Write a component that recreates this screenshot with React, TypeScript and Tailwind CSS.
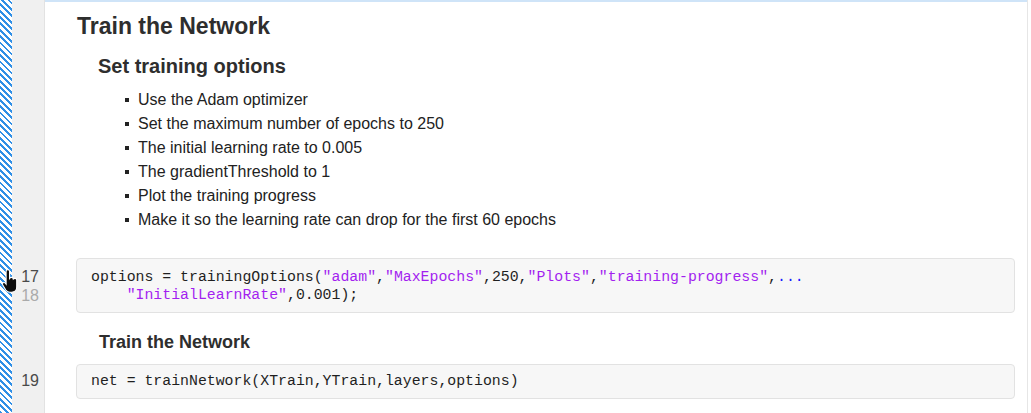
import React from 'react'

const sans = "font-['Liberation_Sans',Arial,sans-serif]"
const mono = "font-['Liberation_Mono','Courier_New',monospace]"

const bullets = [
  'Use the Adam optimizer',
  'Set the maximum number of epochs to 250',
  'The initial learning rate to 0.005',
  'The gradientThreshold to 1',
  'Plot the training progress',
  'Make it so the learning rate can drop for the first 60 epochs',
]

function Str({ children }: { children: React.ReactNode }) {
  return <span className="text-[#a31ff0]">{children}</span>
}

// gutter cell + content cell, so line numbers follow the flow of the code
function Row({
  gutter,
  children,
  className = '',
}: {
  gutter?: React.ReactNode
  children?: React.ReactNode
  className?: string
}) {
  return (
    <div className={`flex ${className}`}>
      <div className="w-[33px] shrink-0 bg-[#f0f0f0] border-r border-[#e2e2e2] pr-[5px] text-right text-[16px] leading-[18px]">
        {gutter}
      </div>
      <div className="flex-1 min-w-0 pr-[12px]">{children}</div>
    </div>
  )
}

function PointerHand() {
  return (
    <svg
      className="absolute left-[1px] top-[267px]"
      width="18"
      height="26"
      viewBox="0 0 16 24"
    >
      <path
        d="M6 2.5c1 0 1.6.7 1.6 1.7v6.3c.4-.6 1-.9 1.7-.9 1 0 1.6.6 1.7 1.5.4-.4.9-.6 1.5-.6 1 0 1.7.7 1.7 1.7v6.3c0 2.7-2 4.8-4.6 4.8H8c-1.6 0-3-.8-3.9-2.1L1.3 16.6c-.5-.8-.3-1.7.4-2.1.7-.4 1.5-.2 2 .4l.7.9V4.2c0-1 .6-1.7 1.6-1.7z"
        fill="#0c0c0c"
        stroke="#ffffff"
        strokeWidth="1"
      />
    </svg>
  )
}

export default function App() {
  return (
    <div className={`relative flex h-[413px] w-[1031px] overflow-hidden bg-white ${sans}`}>
      {/* striped margin */}
      <div className="w-[12px] shrink-0 bg-[repeating-linear-gradient(45deg,#2f8fe6_0px,#2f8fe6_2px,#ffffff_2px,#ffffff_4.5px)]" />

      <div className="flex w-[1016px] flex-col border-r border-[#e6e6e6]">
        {/* top bar */}
        <Row className="h-[2px]">
          <div className="-mr-[12px] h-[2px] bg-[#cfe4f8]" />
        </Row>

        <Row>
          <h1 className="mt-[10px] ml-[32px] text-[23px] leading-[28px] font-bold text-[#2e2e2e]">
            Train the Network
          </h1>
        </Row>

        <Row>
          <h2 className="mt-[14px] ml-[53px] text-[20px] leading-[24px] font-bold text-[#2e2e2e]">
            Set training options
          </h2>
        </Row>

        <Row>
          <ul className="mt-[10px] ml-[80px] text-[16px] leading-[24px] text-[#222]">
            {bullets.map((b) => (
              <li key={b} className="flex items-center">
                <span className="mr-[9px] h-[4px] w-[4px] bg-[#222]" />
                {b}
              </li>
            ))}
          </ul>
        </Row>

        <Row
          gutter={
            <div className="pt-[36px]">
              <div className="text-[#4a4a4a]">17</div>
              <div className="pt-[1px] text-[#aaaaaa]">18</div>
            </div>
          }
        >
          <div
            className={`mt-[26px] ml-[31px] rounded-[4px] border border-[#e2e2e2] bg-[#f7f7f7] pt-[9px] pb-[8px] pl-[14px] text-[14.85px] leading-[18px] whitespace-pre text-[#1f1f1f] ${mono}`}
          >
            <div>
              options = trainingOptions(<Str>"adam"</Str>,<Str>"MaxEpochs"</Str>,250,
              <Str>"Plots"</Str>,<Str>"training-progress"</Str>,
              <span className="text-[#1a1aff]">...</span>
            </div>
            <div>
              {'    '}
              <Str>"InitialLearnRate"</Str>,0.001);
            </div>
          </div>
        </Row>

        <Row>
          <h3 className="mt-[17px] ml-[54px] text-[18px] leading-[24px] font-bold text-[#2e2e2e]">
            Train the Network
          </h3>
        </Row>

        <Row gutter={<div className="pt-[18px] text-[#4a4a4a]">19</div>}>
          <div
            className={`mt-[10px] ml-[31px] rounded-[4px] border border-[#e2e2e2] bg-[#f7f7f7] pt-[7px] pb-[8px] pl-[14px] text-[14.85px] leading-[18px] whitespace-pre text-[#1f1f1f] ${mono}`}
          >
            net = trainNetwork(XTrain,YTrain,layers,options)
          </div>
        </Row>

        <Row className="flex-1" />
      </div>

      <PointerHand />
    </div>
  )
}
